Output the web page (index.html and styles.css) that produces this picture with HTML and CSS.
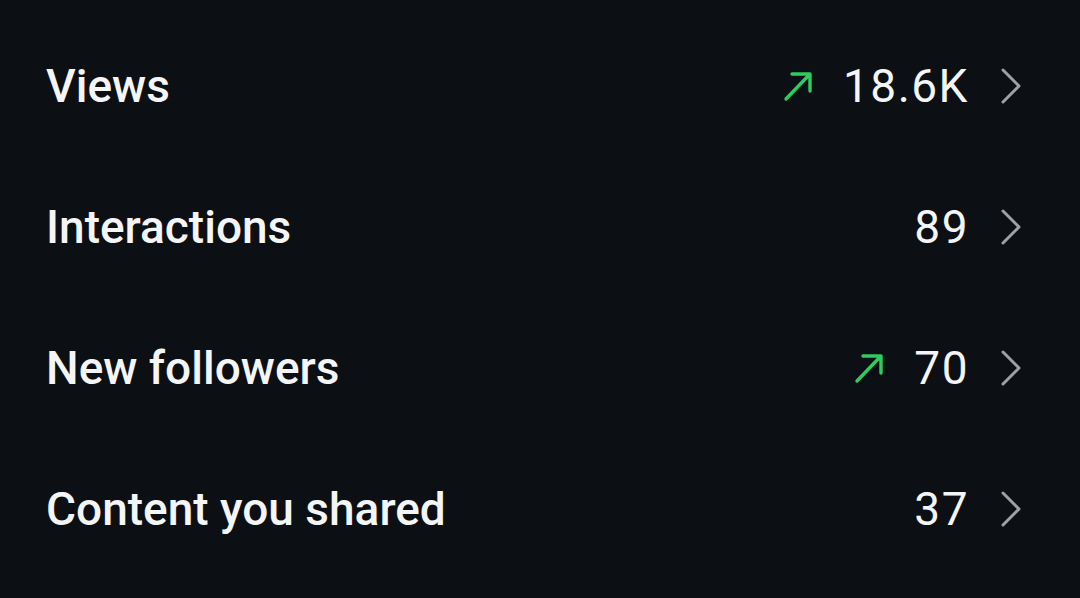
FILE: index.html
```html
<!DOCTYPE html>
<html>
<head>
<meta charset="utf-8">
<link rel="stylesheet" href="styles.css">
</head>
<body>
<div class="list">
  <div class="row">
    <span class="label">Views</span>
    <span class="right">
      <svg class="trend" viewBox="0 0 30 32" width="30" height="32"><path d="M3 29 L27 4 M9 4 H27 V21" fill="none" stroke="#2ecc5f" stroke-width="3.4" stroke-linecap="round" stroke-linejoin="round"/></svg>
      <span class="value">18.6K</span>
      <svg class="chev" viewBox="0 0 22 36" width="22" height="36"><path d="M3 2 L19 18 L3 34" fill="none" stroke="#a1a1a4" stroke-width="3" stroke-linecap="round" stroke-linejoin="round"/></svg>
    </span>
  </div>
  <div class="row">
    <span class="label">Interactions</span>
    <span class="right">
      <span class="value">89</span>
      <svg class="chev" viewBox="0 0 22 36" width="22" height="36"><path d="M3 2 L19 18 L3 34" fill="none" stroke="#a1a1a4" stroke-width="3" stroke-linecap="round" stroke-linejoin="round"/></svg>
    </span>
  </div>
  <div class="row">
    <span class="label">New followers</span>
    <span class="right">
      <svg class="trend" viewBox="0 0 30 32" width="30" height="32"><path d="M3 29 L27 4 M9 4 H27 V21" fill="none" stroke="#2ecc5f" stroke-width="3.4" stroke-linecap="round" stroke-linejoin="round"/></svg>
      <span class="value">70</span>
      <svg class="chev" viewBox="0 0 22 36" width="22" height="36"><path d="M3 2 L19 18 L3 34" fill="none" stroke="#a1a1a4" stroke-width="3" stroke-linecap="round" stroke-linejoin="round"/></svg>
    </span>
  </div>
  <div class="row">
    <span class="label">Content you shared</span>
    <span class="right">
      <span class="value">37</span>
      <svg class="chev" viewBox="0 0 22 36" width="22" height="36"><path d="M3 2 L19 18 L3 34" fill="none" stroke="#a1a1a4" stroke-width="3" stroke-linecap="round" stroke-linejoin="round"/></svg>
    </span>
  </div>
</div>
</body>
</html>
```

FILE: styles.css
```css
html, body {
  margin: 0;
  padding: 0;
  background: #0c0f14;
  height: 100%;
}
body {
  font-family: Roboto, "Liberation Sans", sans-serif;
  color: #f4f5f6;
}
.list {
  padding: 15px 58px 0 46px;
  display: flex;
  flex-direction: column;
}
.row {
  height: 141px;
  display: flex;
  align-items: center;
  justify-content: space-between;
}
.label {
  font-size: 46px;
  font-weight: 500;
}
.right {
  display: flex;
  align-items: center;
}
.trend {
  margin-right: 30px;
}
.value {
  font-size: 46px;
  font-weight: 400;
  letter-spacing: 1.5px;
}
.chev {
  margin-left: 31px;
}
```
